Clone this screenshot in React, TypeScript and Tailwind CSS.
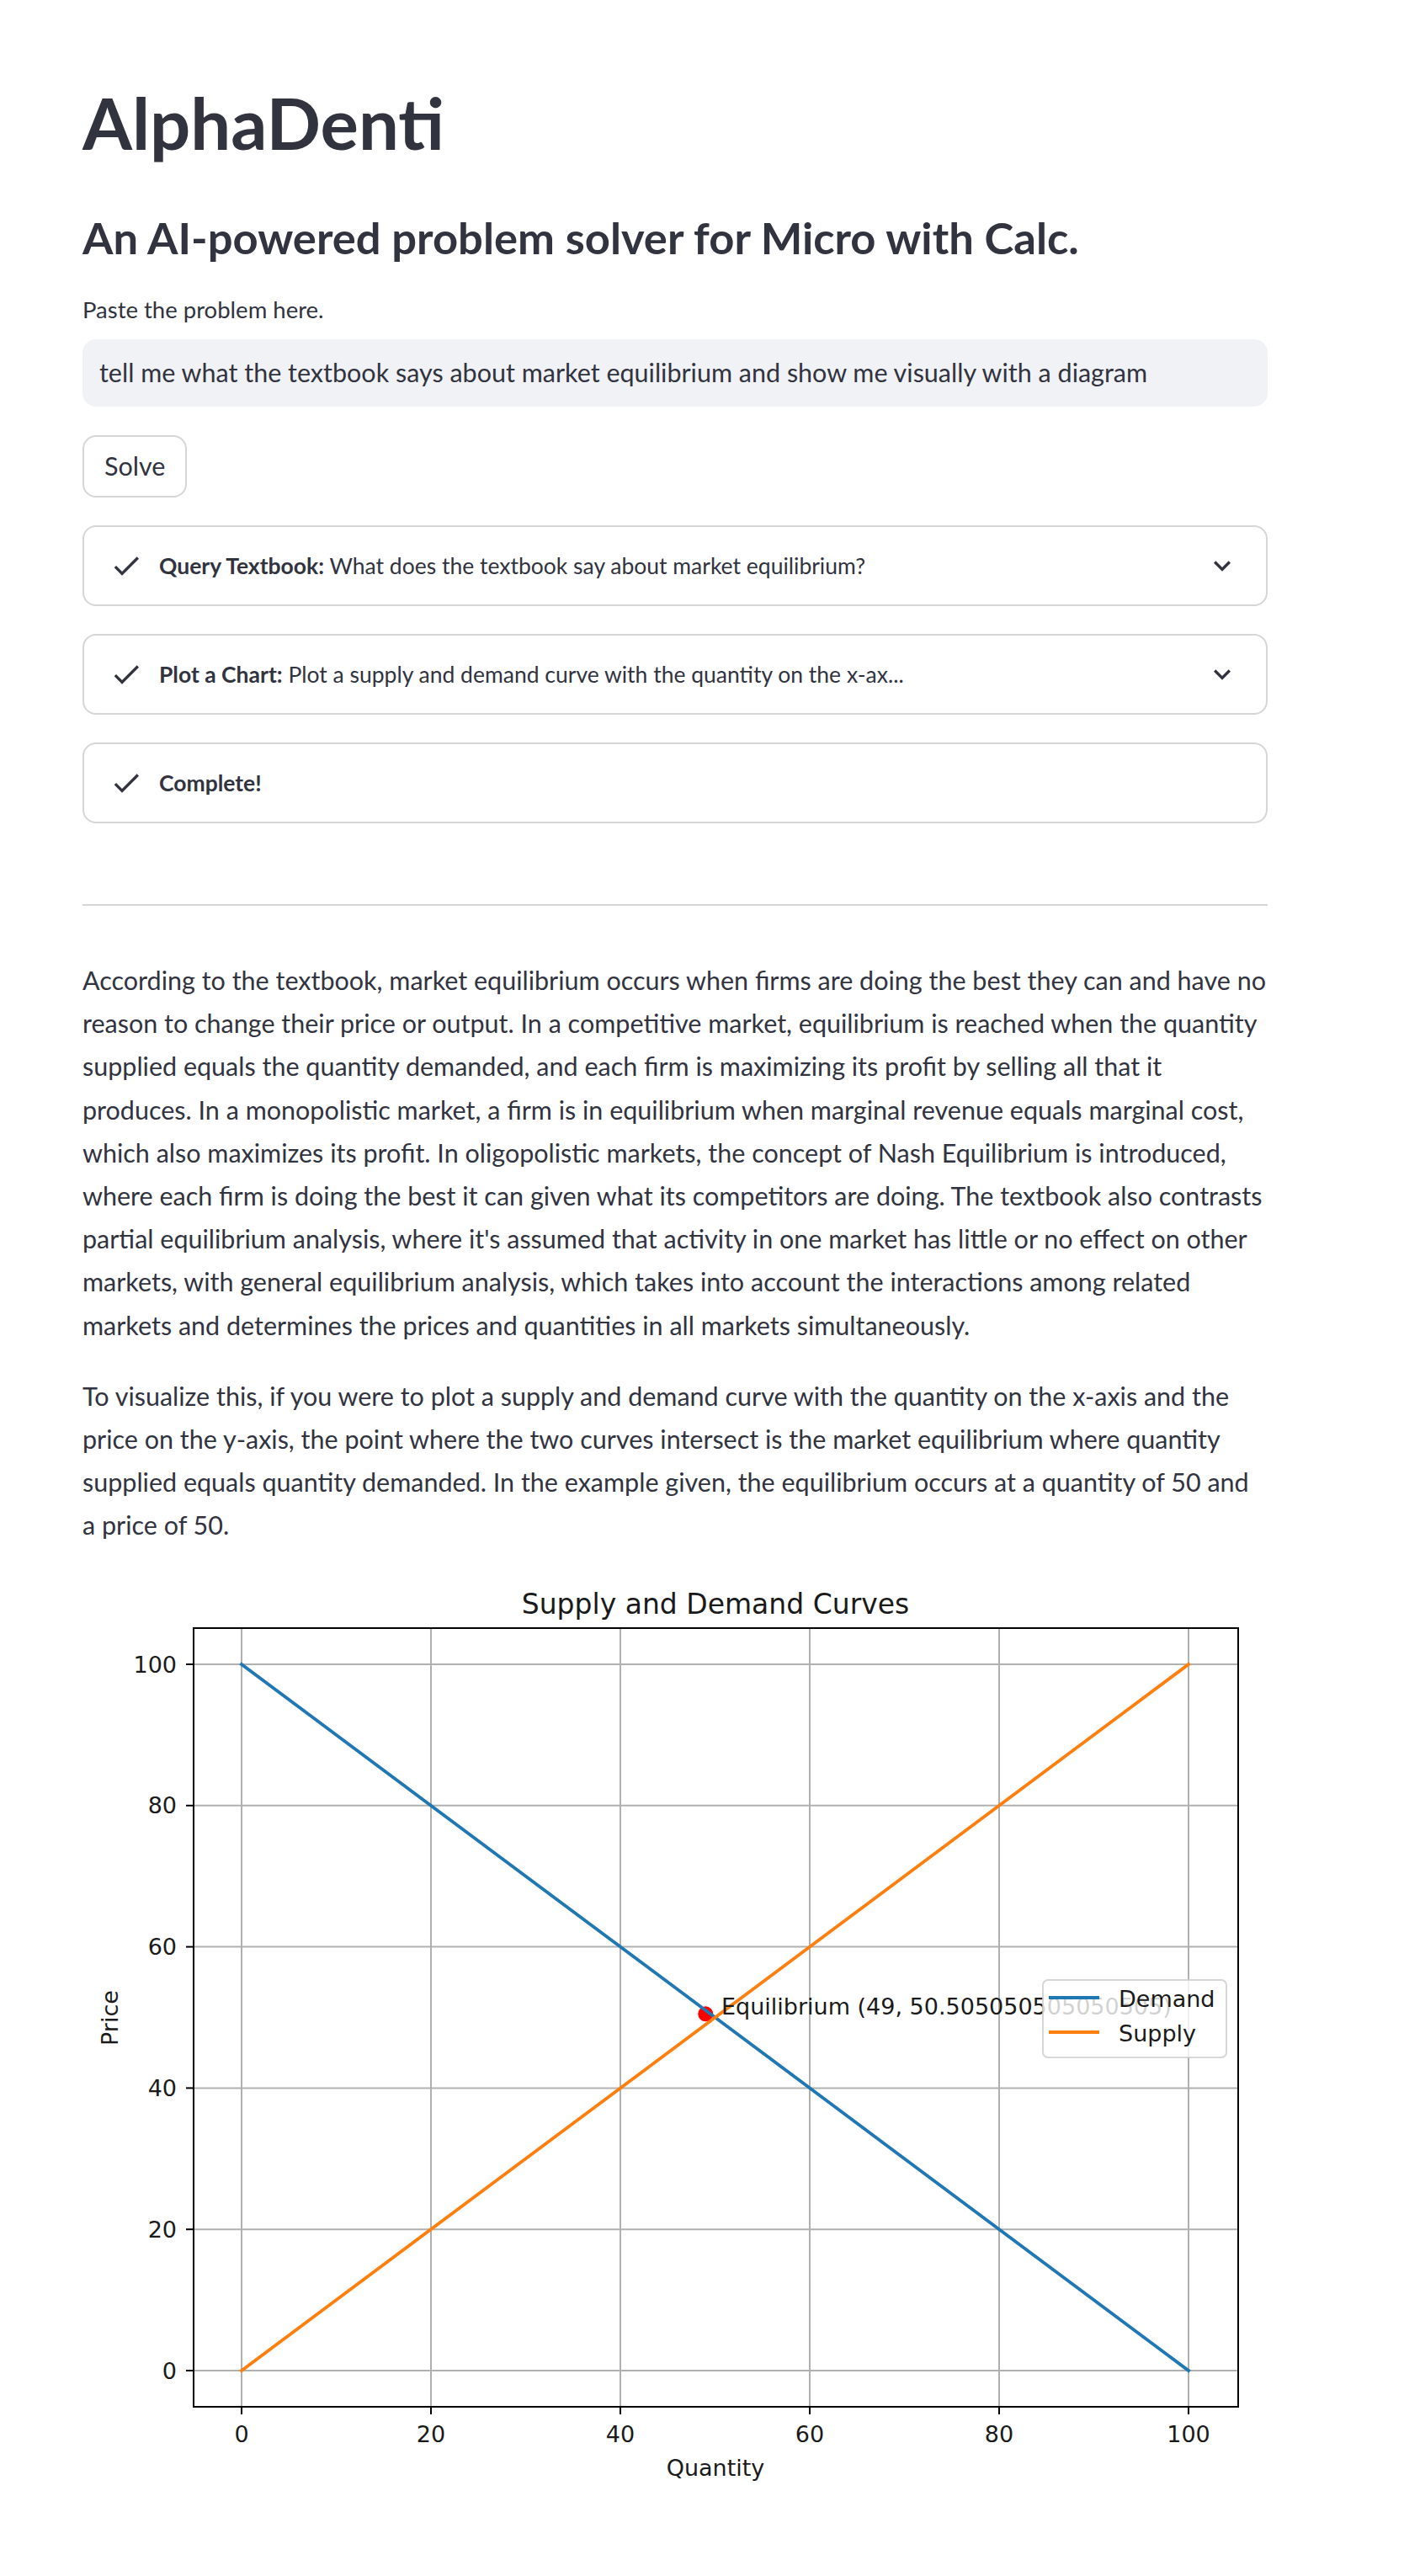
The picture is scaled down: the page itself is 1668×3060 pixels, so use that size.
import React from "react";

const font = "font-['Lato','Noto_Sans',sans-serif]";

// chart helpers: data -> page pixels (the svg viewBox uses page coordinates)
const xPix = (v: number) => 287 + v * 11.25;
const yPix = (v: number) => 2815 - v * 8.39;
const ticks = [0, 20, 40, 60, 80, 100];

const para1 = [
  "According to the textbook, market equilibrium occurs when firms are doing the best they can and have no",
  "reason to change their price or output. In a competitive market, equilibrium is reached when the quantity",
  "supplied equals the quantity demanded, and each firm is maximizing its profit by selling all that it",
  "produces. In a monopolistic market, a firm is in equilibrium when marginal revenue equals marginal cost,",
  "which also maximizes its profit. In oligopolistic markets, the concept of Nash Equilibrium is introduced,",
  "where each firm is doing the best it can given what its competitors are doing. The textbook also contrasts",
  "partial equilibrium analysis, where it's assumed that activity in one market has little or no effect on other",
  "markets, with general equilibrium analysis, which takes into account the interactions among related",
  "markets and determines the prices and quantities in all markets simultaneously.",
];

const para2 = [
  "To visualize this, if you were to plot a supply and demand curve with the quantity on the x-axis and the",
  "price on the y-axis, the point where the two curves intersect is the market equilibrium where quantity",
  "supplied equals quantity demanded. In the example given, the equilibrium occurs at a quantity of 50 and",
  "a price of 50.",
];

function CheckIcon() {
  return (
    <svg viewBox="0 0 24 24" className="w-[40px] h-[40px] shrink-0" fill="#31333f">
      <path d="M9 16.17L4.83 12l-1.42 1.41L9 19 21 7l-1.41-1.41z" />
    </svg>
  );
}

function ChevronIcon() {
  return (
    <svg viewBox="0 0 24 24" className="w-[40px] h-[40px] shrink-0" fill="#31333f">
      <path d="M16.59 8.59L12 13.17 7.41 8.59 6 10l6 6 6-6z" />
    </svg>
  );
}

function Step({ title, text, chevron }: { title: string; text?: string; chevron?: boolean }) {
  return (
    <div className="h-[96px] border-2 border-[#d6d6d9] rounded-[16px] flex items-center pl-[30px] pr-[32px]">
      <CheckIcon />
      <div className="ml-[19px] text-[26.5px] leading-none text-[#31333f] flex-1">
        <span className="font-bold">{title}</span>
        {text && <span> {text}</span>}
      </div>
      {chevron && <ChevronIcon />}
    </div>
  );
}

function Lines({ lines }: { lines: string[] }) {
  return (
    <>
      {lines.map((l, i) => (
        <span key={i} className="block whitespace-nowrap">
          {l}
        </span>
      ))}
    </>
  );
}

function Chart() {
  return (
    <svg
      viewBox="98 1860 1408 1120"
      width={1408}
      height={1120}
      className="block"
      fontFamily="'DejaVu Sans', sans-serif"
    >
      <text x={850} y={1904} fontSize={33} textAnchor="middle" dominantBaseline="central" fill="#1a1a1a">
        Supply and Demand Curves
      </text>

      {/* grid */}
      {ticks.map((t) => (
        <line key={"gx" + t} x1={xPix(t)} x2={xPix(t)} y1={1933} y2={2858} stroke="#b0b0b0" strokeWidth={2} />
      ))}
      {ticks.map((t) => (
        <line key={"gy" + t} x1={230} x2={1471} y1={yPix(t)} y2={yPix(t)} stroke="#b0b0b0" strokeWidth={2} />
      ))}

      {/* equilibrium point sits under the lines */}
      <circle cx={xPix(49)} cy={yPix(50.505)} r={9} fill="#ff0000" />

      <line x1={xPix(0)} y1={yPix(100)} x2={xPix(100)} y2={yPix(0)} stroke="#1f77b4" strokeWidth={3.8} strokeLinecap="square" />
      <line x1={xPix(0)} y1={yPix(0)} x2={xPix(100)} y2={yPix(100)} stroke="#ff7f0e" strokeWidth={3.8} strokeLinecap="square" />

      <text x={857} y={2392} fontSize={27} fill="#1a1a1a">
        Equilibrium (49, 50.505050505050505)
      </text>

      {/* frame */}
      <rect x={230} y={1933} width={1241} height={925} fill="none" stroke="#000" strokeWidth={2} />

      {/* ticks + labels */}
      {ticks.map((t) => (
        <g key={"tx" + t}>
          <line x1={xPix(t)} x2={xPix(t)} y1={2858} y2={2867} stroke="#000" strokeWidth={2} />
          <text x={xPix(t)} y={2890} fontSize={27} textAnchor="middle" dominantBaseline="central" fill="#1a1a1a">
            {t}
          </text>
        </g>
      ))}
      {ticks.map((t) => (
        <g key={"ty" + t}>
          <line x1={221} x2={230} y1={yPix(t)} y2={yPix(t)} stroke="#000" strokeWidth={2} />
          <text x={210} y={yPix(t)} fontSize={27} textAnchor="end" dominantBaseline="central" fill="#1a1a1a">
            {t}
          </text>
        </g>
      ))}

      <text x={850} y={2930} fontSize={27} textAnchor="middle" dominantBaseline="central" fill="#1a1a1a">
        Quantity
      </text>
      <text
        x={130}
        y={2396}
        fontSize={27}
        textAnchor="middle"
        dominantBaseline="central"
        fill="#1a1a1a"
        transform="rotate(-90 130 2396)"
      >
        Price
      </text>

      {/* legend */}
      <rect x={1239} y={2351} width={218} height={92} rx={6} fill="#ffffff" fillOpacity={0.8} stroke="#cccccc" strokeOpacity={0.8} strokeWidth={2} />
      <line x1={1246} x2={1306} y1={2372} y2={2372} stroke="#1f77b4" strokeWidth={3.8} />
      <text x={1329} y={2373} fontSize={27} dominantBaseline="central" fill="#1a1a1a">
        Demand
      </text>
      <line x1={1246} x2={1306} y1={2413} y2={2413} stroke="#ff7f0e" strokeWidth={3.8} />
      <text x={1329} y={2414} fontSize={27} dominantBaseline="central" fill="#1a1a1a">
        Supply
      </text>
    </svg>
  );
}

export default function App() {
  return (
    <div className={`${font} bg-white text-[#31333f] min-h-[3060px] pl-[98px] pt-[94px]`}>
      <div className="w-[1408px]">
        <h1 className="text-[85px] leading-[1.2] font-bold">AlphaDenti</h1>
        <h3 className="mt-[54px] text-[52.5px] leading-[1.2] font-bold">
          An AI-powered problem solver for Micro with Calc.
        </h3>
        <label className="block mt-[38px] text-[27.5px] leading-[1.2]">Paste the problem here.</label>
        <div className="mt-[19px] h-[80px] bg-[#f0f2f6] rounded-[16px] flex items-center px-[20px] text-[30.5px]">
          tell me what the textbook says about market equilibrium and show me visually with a diagram
        </div>
        <button className="mt-[34px] h-[74px] px-[24px] border-2 border-[#d6d6d9] rounded-[16px] text-[30.5px] bg-white">
          Solve
        </button>

        <div className="mt-[33px] flex flex-col gap-[33px]">
          <Step title="Query Textbook:" text="What does the textbook say about market equilibrium?" chevron />
          <Step title="Plot a Chart:" text="Plot a supply and demand curve with the quantity on the x-ax..." chevron />
          <Step title="Complete!" />
        </div>

        <hr className="mt-[96px] border-0 border-t-2 border-[#d6d6d9]" />

        <div className="mt-[63px] text-[30.5px] leading-[51.2px]">
          <p>
            <Lines lines={para1} />
          </p>
          <p className="mt-[33px]">
            <Lines lines={para2} />
          </p>
        </div>

        <div className="mt-[23px]">
          <Chart />
        </div>
      </div>
    </div>
  );
}
